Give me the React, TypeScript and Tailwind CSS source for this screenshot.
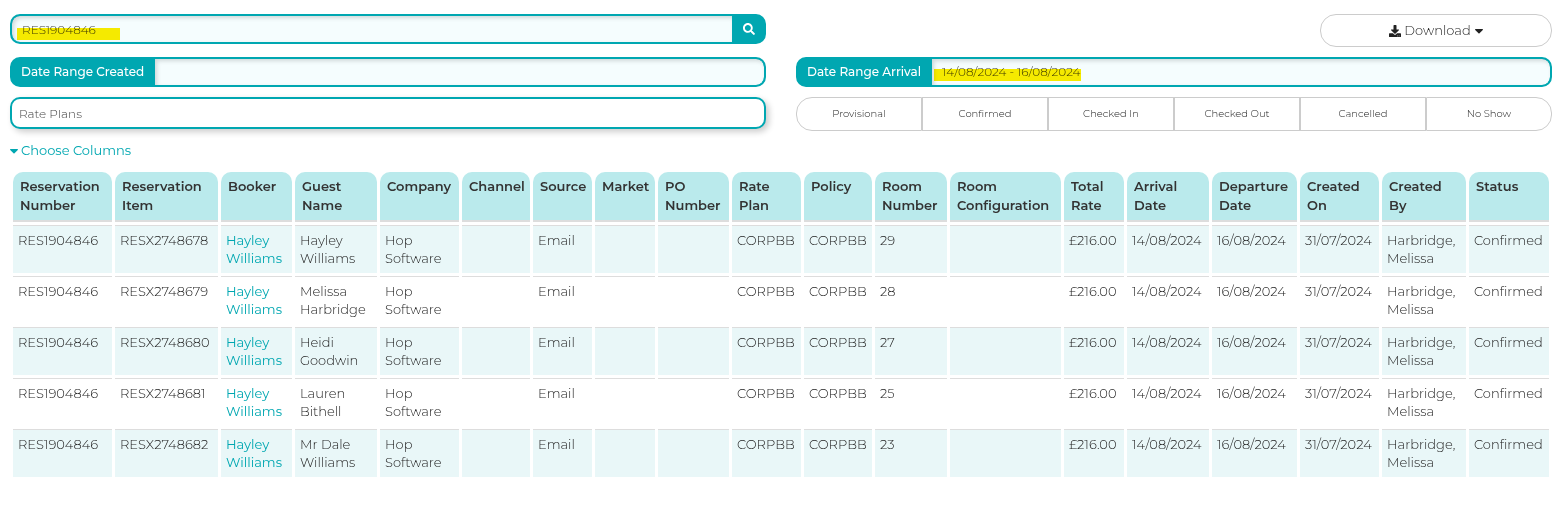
import { useState } from "react";
import { FaDownload, FaSearch } from "react-icons/fa";

interface Reservation {
  item: string;
  guest: string;
  room: string;
}

const columns = [
  { label: "Reservation Number", width: "w-[99px]" },
  { label: "Reservation Item", width: "w-[103px]" },
  { label: "Booker", width: "w-[71px]" },
  { label: "Guest Name", width: "w-[82px]" },
  { label: "Company", width: "w-[79px]" },
  { label: "Channel", width: "w-[68px]" },
  { label: "Source", width: "w-[59px]" },
  { label: "Market", width: "w-[60px]" },
  { label: "PO Number", width: "w-[71px]" },
  { label: "Rate Plan", width: "w-[69px]" },
  { label: "Policy", width: "w-[68px]" },
  { label: "Room Number", width: "w-[72px]" },
  { label: "Room Configuration", width: "w-[111px]" },
  { label: "Total Rate", width: "w-[60px]" },
  { label: "Arrival Date", width: "w-[82px]" },
  { label: "Departure Date", width: "w-[85px]" },
  { label: "Created On", width: "w-[79px]" },
  { label: "Created By", width: "w-[84px]" },
  { label: "Status", width: "w-[80px]" },
];

const reservations: Reservation[] = [
  { item: "RESX2748678", guest: "Hayley Williams", room: "29" },
  { item: "RESX2748679", guest: "Melissa Harbridge", room: "28" },
  { item: "RESX2748680", guest: "Heidi Goodwin", room: "27" },
  { item: "RESX2748681", guest: "Lauren Bithell", room: "25" },
  { item: "RESX2748682", guest: "Mr Dale Williams", room: "23" },
];

const statuses = ["Provisional", "Confirmed", "Checked In", "Checked Out", "Cancelled", "No Show"];

const fieldBox = "flex h-[30px] overflow-hidden rounded-[10px] border-2 border-[#00a7b1] bg-[#00a7b1]";
const fieldInput =
  "w-full min-w-0 bg-[#f5fdfe] px-2.5 text-xs text-[#444] shadow-[inset_2px_2px_4px_rgba(0,0,0,0.15)] outline-none";
const fieldLabel = "flex shrink-0 items-center pl-[9px] pr-[11px] text-xs font-medium text-white";

function Caret() {
  return (
    <svg width="8" height="5" viewBox="0 0 8 5" fill="currentColor" aria-hidden="true">
      <path d="M.6 0h6.8c.5 0 .8.5.4.9L4.5 4.3a.7.7 0 0 1-1 0L.2.9C-.2.5.1 0 .6 0z" />
    </svg>
  );
}

export default function App() {
  const [search, setSearch] = useState("RES1904846");
  const [created, setCreated] = useState("");
  const [arrival, setArrival] = useState("14/08/2024 - 16/08/2024");
  const [ratePlans, setRatePlans] = useState("");

  return (
    <div className="bg-white pt-3.5 pr-[9px] pl-2.5 font-['Montserrat','Inter',sans-serif] text-[13px] font-light text-[#222]">
      <div className="grid grid-cols-2 items-start gap-x-[30px] gap-y-2.5">
        <div className={fieldBox}>
          <div className="relative flex min-w-0 flex-1">
            <input
              aria-label="Search reservations"
              className={`${fieldInput} rounded-l-lg pt-px`}
              value={search}
              onChange={(e) => setSearch(e.target.value)}
            />
            <span className="pointer-events-none absolute bottom-0.5 left-[5px] h-3 w-[103px] bg-[#ffec00] mix-blend-multiply" />
          </div>
          <button aria-label="Search" className="flex w-8 items-center justify-center pl-0.5 text-white">
            <FaSearch size={12} />
          </button>
        </div>
        <button className="flex h-[33px] w-[232px] items-center justify-center justify-self-end rounded-2xl border border-[#ccc] bg-white">
          <FaDownload size={12} />
          <span className="mr-1 ml-[3px]">Download</span>
          <span className="pt-0.5">
            <Caret />
          </span>
        </button>

        <div className={fieldBox}>
          <label htmlFor="created" className={fieldLabel}>Date Range Created</label>
          <input
            id="created"
            className={`${fieldInput} rounded-r-lg`}
            value={created}
            onChange={(e) => setCreated(e.target.value)}
          />
        </div>
        <div className={fieldBox}>
          <label htmlFor="arrival" className={fieldLabel}>Date Range Arrival</label>
          <div className="relative flex min-w-0 flex-1">
            <input
              id="arrival"
              className={`${fieldInput} rounded-r-lg`}
              value={arrival}
              onChange={(e) => setArrival(e.target.value)}
            />
            <span className="pointer-events-none absolute bottom-1 left-0.5 h-3 w-[147px] bg-[#ffec00] mix-blend-multiply" />
          </div>
        </div>

        <input
          aria-label="Rate Plans"
          placeholder="Rate Plans"
          className="h-8 w-full rounded-[10px] border-2 border-[#00a7b1] bg-white px-[7px] text-xs shadow-[3px_3px_6px_rgba(0,0,0,0.2)] outline-none placeholder:text-[#444]"
          value={ratePlans}
          onChange={(e) => setRatePlans(e.target.value)}
        />
        <div className="grid h-[34px] grid-cols-6">
          {statuses.map((status) => (
            <button
              key={status}
              className="border border-[#ccc] bg-white pb-0.5 text-[10px] first:rounded-l-2xl last:rounded-r-2xl"
            >
              {status}
            </button>
          ))}
        </div>
      </div>

      <button className="mt-2.5 flex h-5 items-center gap-[3px] font-normal text-[#00a7b1]">
        <Caret />
        Choose Columns
      </button>

      <table className="mt-2 w-full table-fixed border-separate border-spacing-[3px]">
        <thead>
          <tr>
            {columns.map((col) => (
              <th
                key={col.label}
                className={`${col.width} rounded-t-[10px] border-b-2 border-[#ddd] bg-[#baeaec] py-[5px] pr-1 pl-[7px] text-left align-top leading-[19px] font-semibold text-[#333]`}
              >
                {col.label}
              </th>
            ))}
          </tr>
        </thead>
        <tbody className="[&_td]:border-t [&_td]:border-[#ddd] [&_td]:pt-[5px] [&_td]:pr-1 [&_td]:pb-1.5 [&_td]:pl-[5px] [&_td]:align-top [&_td]:leading-[18px]">
          {reservations.map((row) => (
            <tr key={row.item} className="odd:[&>td]:bg-[#e9f7f8]">
              <td>RES1904846</td>
              <td>{row.item}</td>
              <td>
                <a href="#booker" className="font-normal text-[#00a7b1]">Hayley Williams</a>
              </td>
              <td>{row.guest}</td>
              <td>Hop Software</td>
              <td></td>
              <td>Email</td>
              <td></td>
              <td></td>
              <td>CORPBB</td>
              <td>CORPBB</td>
              <td>{row.room}</td>
              <td></td>
              <td>£216.00</td>
              <td>14/08/2024</td>
              <td>16/08/2024</td>
              <td>31/07/2024</td>
              <td>Harbridge, Melissa</td>
              <td>Confirmed</td>
            </tr>
          ))}
        </tbody>
      </table>
    </div>
  );
}
